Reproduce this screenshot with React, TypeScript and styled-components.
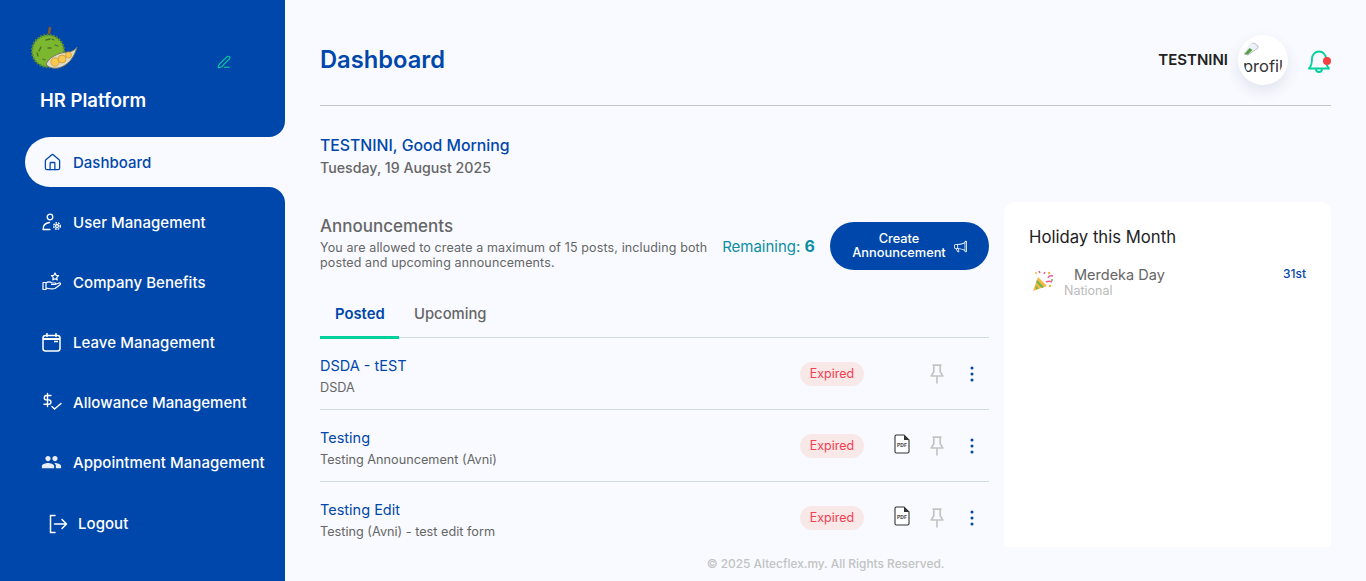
import { ReactNode } from 'react';
import styled, { createGlobalStyle } from 'styled-components';
import { House, PenLine } from 'lucide-react';
import { BsMegaphone } from 'react-icons/bs';
import { MdPeople } from 'react-icons/md';

const GlobalStyle = createGlobalStyle`
    html, body {
        margin: 0;
        height: 100%;
        overflow: hidden;
        background: #f8faff;
    }
    * {
        box-sizing: border-box;
    }
    body {
        font-family: Inter, 'Open Sans', sans-serif;
    }
`;

const Page = styled.div`
    display: flex;
    width: 1366px;
    height: 581px;
    overflow: hidden;
    background: #f8faff;
`;

const Sidebar = styled.aside`
    width: 285px;
    flex: none;
    display: flex;
    flex-direction: column;
`;

const SidebarHead = styled.div`
    height: 137px;
    background: #0047ab;
    border-bottom-right-radius: 16px;
    padding: 26px 0 0 31px;
    position: relative;
`;

const LogoSvg = styled.svg`
    display: block;
`;

const Brand = styled.div`
    margin: 14px 0 0 9px;
    color: #fff;
    font-size: 18.5px;
    font-weight: 600;
    line-height: 24px;
`;

const EditButton = styled.span`
    position: absolute;
    left: 217px;
    top: 55px;
    display: flex;
    color: #00d09c;
`;

const ActiveSlot = styled.div`
    height: 50px;
    padding-left: 25px;
    background: #0047ab;
`;

const ActiveItem = styled.div`
    height: 50px;
    display: flex;
    align-items: center;
    gap: 11px;
    padding-left: 18px;
    background: #f8faff;
    border-radius: 25px 0 0 25px;
    color: #0047ab;
    font-size: 15px;
    font-weight: 500;
`;

const NavList = styled.nav`
    flex: 1;
    display: flex;
    flex-direction: column;
    gap: 10px;
    padding: 10px 0 0 41px;
    background: #0047ab;
    border-top-right-radius: 16px;
`;

const NavItem = styled.div`
    height: 50px;
    display: flex;
    align-items: center;
    gap: 11px;
    color: #fff;
    font-size: 15px;
    font-weight: 500;
    letter-spacing: 0.05px;
    white-space: nowrap;
`;

const NavIcon = styled.span`
    width: 21px;
    display: flex;
    justify-content: center;
    flex: none;
`;

const LogoutItem = styled(NavItem)`
    padding: 3px 0 0 6px;
    gap: 10px;
`;

const Main = styled.main`
    flex: 1;
    min-width: 0;
    display: flex;
    flex-direction: column;
    padding: 0 35px;
`;

const TopBar = styled.header`
    height: 106px;
    flex: none;
    display: flex;
    align-items: center;
    justify-content: space-between;
    padding-top: 14px;
    border-bottom: 1px solid #c4c6cc;
`;

const Title = styled.h1`
    margin: 0;
    color: #0047ab;
    font-size: 23.7px;
    font-weight: 600;
`;

const UserBox = styled.div`
    display: flex;
    align-items: center;
`;

const UserName = styled.span`
    margin-right: 10px;
    color: #222;
    font-size: 15px;
    font-weight: 600;
`;

const Avatar = styled.div`
    width: 50px;
    height: 50px;
    border-radius: 50%;
    background: #fff;
    box-shadow: 0 6px 14px rgba(60, 70, 110, 0.12);
    display: flex;
    align-items: center;
    justify-content: center;
`;

const AvatarClip = styled.div`
    width: 40px;
    height: 40px;
    border-radius: 50%;
    overflow: hidden;
    font-size: 16.5px;
    line-height: 20px;
    color: #333;
    white-space: nowrap;
`;

const BrokenSvg = styled.svg`
    display: block;
`;

const BellWrap = styled.span`
    position: relative;
    margin: 3px 0 0 19px;
    display: flex;
`;

const BellDot = styled.span`
    position: absolute;
    right: 0;
    top: 9px;
    width: 8px;
    height: 8px;
    border-radius: 50%;
    background: #f44141;
`;

const Greeting = styled.div`
    margin-top: 29px;
    color: #0047ab;
    font-size: 15.8px;
    font-weight: 500;
    line-height: 22px;
`;

const DateLine = styled.div`
    margin-top: 1px;
    color: #666;
    font-size: 14.2px;
    font-weight: 500;
    line-height: 20px;
`;

const Columns = styled.div`
    margin-top: 24px;
    flex: 1;
    min-height: 0;
    display: flex;
    gap: 15px;
`;

const LeftColumn = styled.section`
    width: 669px;
    flex: none;
    min-height: 0;
    overflow: hidden;
`;

const AnnounceHead = styled.div`
    display: flex;
    align-items: center;
    margin-top: 20px;
    height: 48px;
`;

const AnnounceText = styled.div`
    width: 400px;
    flex: none;
`;

const SectionTitle = styled.h2`
    margin: -6px 0 0;
    color: #666;
    font-size: 17px;
    font-weight: 500;
    line-height: 20px;
`;

const SectionHint = styled.p`
    margin: 4px 0 0;
    color: #666;
    font-size: 12.5px;
    letter-spacing: 0.13px;
    line-height: 15px;
`;

const Remaining = styled.div`
    margin-left: auto;
    color: #0a8ea0;
    font-size: 15px;
    white-space: nowrap;
`;

const RemainingCount = styled.b`
    font-size: 16px;
    font-weight: 700;
`;

const CreateButton = styled.button`
    width: 159px;
    height: 48px;
    margin-left: 15px;
    border: 0;
    border-radius: 24px;
    background: #0047ab;
    color: #fff;
    font: 500 12.8px/14px Inter, sans-serif;
    display: flex;
    align-items: center;
    justify-content: center;
    gap: 8px;
`;

const Tabs = styled.div`
    display: flex;
    margin-top: 18px;
    height: 50px;
    border-bottom: 1px solid #d3dbe2;
`;

const Tab = styled.div<{ $active?: boolean }>`
    width: ${({ $active }) => ($active ? '79px' : 'auto')};
    padding: 3px 0 0 15px;
    display: flex;
    align-items: center;
    height: 51px;
    color: ${({ $active }) => ($active ? '#0047ab' : '#666')};
    font-size: 14.8px;
    font-weight: ${({ $active }) => ($active ? 600 : 500)};
    border-bottom: 3px solid ${({ $active }) => ($active ? '#00d09c' : 'transparent')};
`;

const Row = styled.div`
    height: 72px;
    display: flex;
    align-items: center;
    border-bottom: 1px solid #d3dbe2;
`;

const RowText = styled.div`
    flex: 1;
    min-width: 0;
    margin-top: 5px;
`;

const RowTitle = styled.div`
    color: #0047ab;
    font-size: 14.5px;
    line-height: 20px;
`;

const RowBody = styled.div`
    margin-top: 3.5px;
    color: #666;
    font-size: 12.7px;
    line-height: 16px;
`;

const ExpiredBadge = styled.span`
    width: 64px;
    height: 24px;
    margin-right: 28px;
    border-radius: 12px;
    background: #f9e8e8;
    color: #f4404f;
    font-size: 12.5px;
    display: flex;
    align-items: center;
    justify-content: center;
`;

const PdfSlot = styled.span`
    width: 20px;
    margin: 0 15px 3px 0;
    display: flex;
    justify-content: center;
`;

const PinSlot = styled.span`
    width: 20px;
    margin-right: 15px;
    display: flex;
    justify-content: center;
`;

const Dots = styled.span`
    width: 20px;
    margin-right: 7px;
    display: flex;
    justify-content: center;
`;

const HolidayCard = styled.aside`
    flex: 1;
    background: #fff;
    border-radius: 10px 10px 0 0;
    padding: 24px 25px;
`;

const HolidayTitle = styled.h2`
    margin: 0;
    color: #222;
    font-size: 16.7px;
    font-weight: 400;
    line-height: 22px;
`;

const HolidayRow = styled.div`
    display: flex;
    margin-top: 18px;
`;

const HolidayIcon = styled.span`
    width: 35px;
    flex: none;
    display: flex;
    padding: 4px 0 0 3px;
`;

const HolidayInfo = styled.div`
    flex: 1;
`;

const HolidayName = styled.div`
    padding-left: 10px;
    color: #666;
    font-size: 14.5px;
    line-height: 18px;
`;

const HolidayKind = styled.div`
    color: #bbb;
    font-size: 12.5px;
    line-height: 14px;
`;

const HolidayDate = styled.div`
    margin-top: 1px;
    color: #0047ab;
    font-size: 12px;
    font-weight: 500;
    line-height: 14px;
`;

const Footer = styled.footer`
    height: 34px;
    flex: none;
    display: flex;
    align-items: center;
    justify-content: center;
    color: #c2c2c2;
    font-size: 11.9px;
    font-weight: 500;
    padding-bottom: 1px;
`;

const DurianLogo = () => (
    <LogoSvg width="50" height="48" viewBox="0 0 50 48">
        <path d="M18 8 L19 1" stroke="#8a5a2c" strokeWidth="2.6" />
        <circle cx="17" cy="25" r="16" fill="#7cb82f" stroke="#5f8a2a" strokeWidth="2.4" strokeDasharray="1.6 1.6" />
        <g stroke="#4f6d2a" strokeWidth="1.3" strokeLinecap="round" fill="none">
            <path d="M15 14l4-1M24 19l3 1M10 21l-2 4M17 22l3 0M6 27l1 3M12 33l2 1M21 13l2 1" />
        </g>
        <path d="M15 38 C20 46 40 44 46 21 C42 27 36 26 30 27 C24 29 18 32 15 38Z" fill="#dedbc8" stroke="#77765f" />
        <g fill="#fbc94f" stroke="#c9952f" strokeWidth="0.700">
            <circle cx="24" cy="36" r="4.200" />
            <circle cx="31" cy="33" r="4" />
            <circle cx="37.500" cy="29" r="3" />
        </g>
    </LogoSvg>
);

const HomeIcon = () => <House size={19} strokeWidth={1.6} />;

const BellIcon = () => (
    <svg width="24" height="26" viewBox="0 0 24 26" fill="none" stroke="#00d09c" strokeWidth="1.800" strokeLinejoin="round">
        <path d="M2 20.500c3-3 3-6 3-10a7 7 0 0 1 14 0c0 4 0 7 3 10z" />
        <path d="M9 21a3 3 0 0 0 6 0" />
    </svg>
);

const UserCogIcon = () => (
    <svg width="20" height="18" viewBox="0 0 20 18" fill="none" stroke="#fff" strokeWidth="1.3">
        <circle cx="8" cy="4" r="2.8" />
        <path d="M1 16.500h7M1.200 16C1 12 4 10 7.500 9.500" strokeLinecap="round" />
        <circle cx="15" cy="13" r="1.500" />
        <circle cx="15" cy="13" r="3.300" strokeDasharray="1.700 1" strokeWidth="1.500" />
    </svg>
);

const BenefitsIcon = () => (
    <svg width="20" height="20" viewBox="0 0 20 20" fill="none" stroke="#fff" strokeWidth="1.2" strokeLinejoin="round">
        <path d="M13 1l1.100 2.300 2.500.3-1.800 1.800.4 2.500-2.200-1.200-2.200 1.200.4-2.500-1.800-1.800 2.500-.3z" />
        <path d="M1 10.500h3v7H1zM4 11c2-1.500 4-1.500 6 0h3c1 0 1 1.500 0 1.500H9M13 12.500l4-1.500c1.500-.5 2 1 1 1.700l-5 3.800c-2 .8-5 .5-9-.5" />
    </svg>
);

const CalendarIcon = () => (
    <svg width="19" height="19" viewBox="0 0 19 19" fill="none" stroke="#fff" strokeWidth="1.5">
        <rect x="1" y="2.500" width="17" height="15.500" rx="2.500" />
        <path d="M1 6h17" strokeWidth="2" />
        <path d="M5 .5v3M14 .5v3" strokeLinecap="round" />
        <path d="M12 8.500h4" />
    </svg>
);

const AllowanceIcon = () => (
    <svg width="20" height="20" viewBox="0 0 20 20" fill="none" stroke="#fff" strokeWidth="1.4" strokeLinecap="round">
        <path d="M9 3.500H4.500a2.200 2.200 0 0 0 0 4.400h2.300a2.200 2.200 0 0 1 0 4.400H2M5.500 1.500v13" />
        <path d="M10 14.500l2.500 2.500L19 11.500" />
    </svg>
);

const LogoutIcon = () => (
    <svg width="20" height="20" viewBox="0 0 20 20" fill="none" stroke="#fff" strokeWidth="1.5" strokeLinecap="round" strokeLinejoin="round">
        <path d="M7 1.500H2.500v17H7" />
        <path d="M6.500 10h12M14 5.500l4.500 4.500-4.500 4.500" />
    </svg>
);

const PinIcon = () => (
    <svg width="14" height="20" viewBox="0 0 14 20" fill="none" stroke="#c4c4c4" strokeWidth="1.700" strokeLinejoin="round">
        <path d="M2.500 1.200h9M3.800 1.200v6.500L1.200 12h11.600l-2.600-4.300V1.200" />
        <path d="M7 12v7.500" />
    </svg>
);

const PdfIcon = () => (
    <svg width="16" height="20" viewBox="0 0 16 20">
        <path d="M2.500 1H10l5 5v11.500a1.500 1.500 0 0 1-1.500 1.500h-11A1.500 1.500 0 0 1 1 17.500v-15A1.500 1.500 0 0 1 2.500 1z" fill="#fff" stroke="#333" strokeWidth="1.100" />
        <path d="M10 1v5h5z" fill="#333" />
        <text x="8" y="12.500" textAnchor="middle" fontSize="5" fontWeight="700" fill="#444" fontFamily="Inter, sans-serif">PDF</text>
    </svg>
);

const DotsIcon = () => (
    <svg width="4" height="16" viewBox="0 0 4 16" fill="#0047ab">
        <circle cx="2" cy="2" r="1.500" />
        <circle cx="2" cy="8" r="1.500" />
        <circle cx="2" cy="14" r="1.500" />
    </svg>
);

const BrokenImageIcon = () => (
    <BrokenSvg width="16" height="16" viewBox="0 0 16 16">
        <path d="M1 14V3h10l4 3v2L5 15z" fill="#eef1f8" stroke="#a8acb8" strokeWidth="0.800" />
        <path d="M1.500 14l5-6 3 2-4.500 4.500z" fill="#5a9e48" />
        <path d="M1.500 3.500h7l-7 6z" fill="#b8cdf0" />
    </BrokenSvg>
);

const PartyIcon = () => (
    <svg width="22" height="22" viewBox="0 0 22 22">
        <path d="M1 21l5-14 9 9z" fill="#f5b942" />
        <path d="M3.200 15l3.500 3.500-2.500 1zM5 10l7 7-2 1-6-6z" fill="#6fb552" />
        <path d="M12 4l1-2M8 3l-1-2M16 8c1-2 3-3 5-2" stroke="#ec5c9a" strokeWidth="1.600" fill="none" />
        <path d="M14 12c2-1 4-1 6 0" stroke="#ec5c9a" strokeWidth="1.600" fill="none" />
        <circle cx="17" cy="3" r="1.200" fill="#f5b942" />
        <circle cx="20" cy="10" r="1" fill="#6fb552" />
        <circle cx="18" cy="16" r="1.200" fill="#f5b942" />
        <circle cx="4" cy="3" r="1" fill="#f5b942" />
    </svg>
);

const navItems: { label: string; icon: ReactNode }[] = [
    { label: 'User Management', icon: <UserCogIcon /> },
    { label: 'Company Benefits', icon: <BenefitsIcon /> },
    { label: 'Leave Management', icon: <CalendarIcon /> },
    { label: 'Allowance Management', icon: <AllowanceIcon /> },
    { label: 'Appointment Management', icon: <MdPeople size={24} color="#e9edf5" /> },
];

const announcements = [
    { title: 'DSDA - tEST', body: 'DSDA', pdf: false },
    { title: 'Testing', body: 'Testing Announcement (Avni)', pdf: true },
    { title: 'Testing Edit', body: 'Testing (Avni) - test edit form', pdf: true },
];

export default function App() {
    return (
        <Page>
            <GlobalStyle />
            <Sidebar>
                <SidebarHead>
                    <DurianLogo />
                    <Brand>HR Platform</Brand>
                    <EditButton>
                        <PenLine size={14} strokeWidth={1.8} />
                    </EditButton>
                </SidebarHead>
                <ActiveSlot>
                    <ActiveItem>
                        <HomeIcon />
                        Dashboard
                    </ActiveItem>
                </ActiveSlot>
                <NavList>
                    {navItems.map((item) => (
                        <NavItem key={item.label}>
                            <NavIcon>{item.icon}</NavIcon>
                            {item.label}
                        </NavItem>
                    ))}
                    <LogoutItem>
                        <NavIcon>
                            <LogoutIcon />
                        </NavIcon>
                        Logout
                    </LogoutItem>
                </NavList>
            </Sidebar>
            <Main>
                <TopBar>
                    <Title>Dashboard</Title>
                    <UserBox>
                        <UserName>TESTNINI</UserName>
                        <Avatar>
                            <AvatarClip>
                                <BrokenImageIcon />
                                profile
                            </AvatarClip>
                        </Avatar>
                        <BellWrap>
                            <BellIcon />
                            <BellDot />
                        </BellWrap>
                    </UserBox>
                </TopBar>
                <Greeting>TESTNINI, Good Morning</Greeting>
                <DateLine>Tuesday, 19 August 2025</DateLine>
                <Columns>
                    <LeftColumn>
                        <AnnounceHead>
                            <AnnounceText>
                                <SectionTitle>Announcements</SectionTitle>
                                <SectionHint>
                                    You are allowed to create a maximum of 15 posts, including both posted and upcoming announcements.
                                </SectionHint>
                            </AnnounceText>
                            <Remaining>
                                Remaining: <RemainingCount>6</RemainingCount>
                            </Remaining>
                            <CreateButton>
                                <span>
                                    Create
                                    <br />
                                    Announcement
                                </span>
                                <BsMegaphone size={13} />
                            </CreateButton>
                        </AnnounceHead>
                        <Tabs>
                            <Tab $active>Posted</Tab>
                            <Tab>Upcoming</Tab>
                        </Tabs>
                        {announcements.map((item) => (
                            <Row key={item.title}>
                                <RowText>
                                    <RowTitle>{item.title}</RowTitle>
                                    <RowBody>{item.body}</RowBody>
                                </RowText>
                                <ExpiredBadge>Expired</ExpiredBadge>
                                <PdfSlot>{item.pdf && <PdfIcon />}</PdfSlot>
                                <PinSlot>
                                    <PinIcon />
                                </PinSlot>
                                <Dots>
                                    <DotsIcon />
                                </Dots>
                            </Row>
                        ))}
                    </LeftColumn>
                    <HolidayCard>
                        <HolidayTitle>Holiday this Month</HolidayTitle>
                        <HolidayRow>
                            <HolidayIcon>
                                <PartyIcon />
                            </HolidayIcon>
                            <HolidayInfo>
                                <HolidayName>Merdeka Day</HolidayName>
                                <HolidayKind>National</HolidayKind>
                            </HolidayInfo>
                            <HolidayDate>31st</HolidayDate>
                        </HolidayRow>
                    </HolidayCard>
                </Columns>
                <Footer>© 2025 Altecflex.my. All Rights Reserved.</Footer>
            </Main>
        </Page>
    );
}
